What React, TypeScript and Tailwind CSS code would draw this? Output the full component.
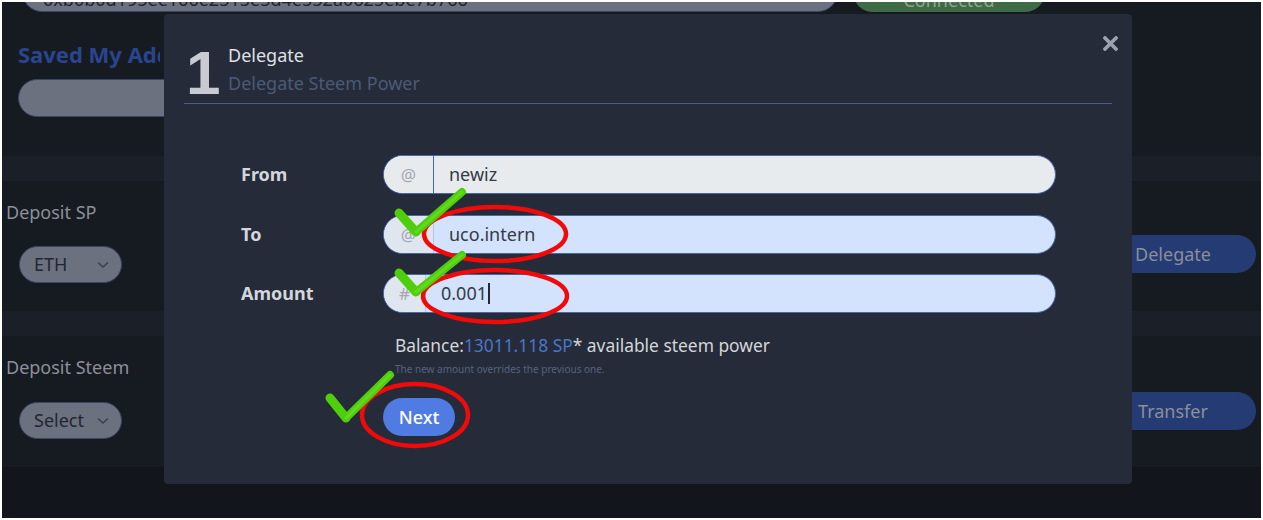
import React from "react";

const font = { fontFamily: '"Noto Sans", "Noto Sans CJK KR", sans-serif' };

function Check({ x0, y0, x1, y1, x2, y2 }: { x0: number; y0: number; x1: number; y1: number; x2: number; y2: number }) {
  return (
    <g>
      <path d={`M${x0} ${y0} L${x1} ${y1}`} stroke="#4fcf0c" strokeWidth={9} strokeLinecap="round" fill="none" />
      <path d={`M${x1} ${y1} L${x2} ${y2}`} stroke="#4fcf0c" strokeWidth={8} strokeLinecap="round" fill="none" />
      <path d={`M${x1} ${y1} L${x2} ${y2}`} stroke="#6ee02a" strokeWidth={3} strokeLinecap="round" fill="none" opacity={0.6} />
    </g>
  );
}

function InputRow({ label, prefix, value, from, prefixW, cursor }: { label: string; prefix: string; value: string; from?: boolean; prefixW: string; cursor?: boolean }) {
  return (
    <div className="flex items-center h-[39px]">
      <div className="w-[142px] text-[18px] font-bold text-[#d3d6db]">{label}</div>
      <div
        className={`flex h-[39px] w-[673px] rounded-full border border-[#4767a6] overflow-hidden ${from ? "bg-[#e8ebee]" : "bg-[#d3e2fd]"}`}
      >
        <div
          className={`${prefixW} flex items-center justify-center text-[17px] text-[#a3a8b0] border-r ${from ? "bg-[#e8ebee] border-[#4767a6]" : "bg-[#e0e6ef] border-[#b9c6dc]"}`}
        >
          {prefix}
        </div>
        <div className="flex items-center pl-[15px] text-[18px] text-[#343b45]">
          {value}
          {cursor && <span className="ml-[1px] inline-block w-[1.5px] h-[21px] bg-[#1f2937]" />}
        </div>
      </div>
    </div>
  );
}

export default function App() {
  return (
    <div className="relative w-[1263px] h-[520px] overflow-hidden border-2 border-white bg-[#12151b]" style={font}>
      {/* background page */}
      <div className="flex flex-col">
        <div className="bg-[#161a21] pl-[18px] pb-[39px]">
          <div className="flex -mt-[30px] items-center">
            <div className="ml-[2px] w-[816px] h-[40px] rounded-full bg-[#6c7180] border border-[#3a4664] flex items-end pb-[2px] pl-[20px] text-[18px] leading-[20px] text-[#1e2430] whitespace-nowrap overflow-hidden">
              0xb0b0d195ee166e2515e5d4e552a0625ebe7b766
            </div>
            <div className="ml-[15px] w-[192px] h-[40px] rounded-full bg-[#3e6a45] flex items-end justify-center pb-[2px] text-[18px] leading-[20px] text-[#8ea88f]">
              Connected
            </div>
          </div>
          <div className="mt-[27px] -ml-[2px] w-[142px] overflow-hidden whitespace-nowrap text-[22px] leading-[30px] font-bold text-[#2a4590]">Saved My Address</div>
          <div className="mt-[10px] -ml-[2px] w-[300px] h-[38px] rounded-full bg-[#6c7180] border border-[#3a4664]" />
        </div>
        <div className="h-[25px] bg-[#1b1f28]" />
        <div className="h-[130px] bg-[#161a21] flex justify-between">
          <div className="pl-[4px] pt-[18px]">
            <div className="text-[18px] leading-[26px] text-[#8c9099]">Deposit SP</div>
            <div className="mt-[21px] ml-[13px] w-[103px] h-[37px] rounded-full bg-[#6c7180] border border-[#3a4664] flex items-center justify-between pl-[14px] pr-[12px] text-[18px] text-[#22262e]">
              <span>ETH</span>
              <svg width="12" height="8" viewBox="0 0 12 8"><path d="M1 1.5 L6 6 L11 1.5" stroke="#3a3f4a" strokeWidth="1.5" fill="none" /></svg>
            </div>
          </div>
          <div className="mt-[54px] mr-[5px] w-[166px] h-[38px] rounded-full bg-[#243b74] flex items-center justify-center text-[18px] text-[#8a8f98]">
            Delegate
          </div>
        </div>
        <div className="h-[25px] bg-[#1b1f28]" />
        <div className="h-[131px] bg-[#161a21] flex justify-between">
          <div className="pl-[4px] pt-[18px]">
            <div className="text-[18px] leading-[26px] text-[#8c9099]">Deposit Steem</div>
            <div className="mt-[22px] ml-[13px] w-[103px] h-[37px] rounded-full bg-[#6c7180] border border-[#3a4664] flex items-center justify-between pl-[14px] pr-[12px] text-[18px] text-[#22262e]">
              <span>Select</span>
              <svg width="12" height="8" viewBox="0 0 12 8"><path d="M1 1.5 L6 6 L11 1.5" stroke="#3a3f4a" strokeWidth="1.5" fill="none" /></svg>
            </div>
          </div>
          <div className="mt-[56px] mr-[5px] w-[166px] h-[38px] rounded-full bg-[#243b74] flex items-center justify-center text-[18px] text-[#8a8f98]">
            Transfer
          </div>
        </div>
      </div>

      {/* modal */}
      <div className="absolute left-[162px] top-[12px] w-[968px] h-[470px] rounded-[4px] bg-[#252b38] px-[20px] pt-[30px]">
        <div className="absolute right-[14px] top-[22px]">
          <svg width="15" height="15" viewBox="0 0 15 15"><path d="M2 2 L13 13 M13 2 L2 13" stroke="#9ca3af" strokeWidth="3.6" strokeLinecap="square" /></svg>
        </div>
        <div className="flex items-center h-[60px] border-b border-[#4a5e88] pb-[1px]">
          <div className="ml-[2px] w-[32px] text-[62px] leading-[58px] font-bold text-[#c8ccd2]" style={{ fontFamily: '"Liberation Sans", sans-serif' }}>1</div>
          <div className="ml-[10px] -mt-[8px]">
            <div className="text-[18px] leading-[28px] text-[#dfe1e5]">Delegate</div>
            <div className="text-[18px] leading-[28px] text-[#4b5a79]">Delegate Steem Power</div>
          </div>
        </div>
        <div className="pl-[57px] mt-[51px] flex flex-col gap-[21px]">
          <InputRow label="From" prefix="@" value="newiz" from prefixW="w-[50px]" />
          <InputRow label="To" prefix="@" value="uco.intern" prefixW="w-[50px]" />
          <div className="-mt-[1px]">
            <InputRow label="Amount" prefix="#" value="0.001" prefixW="w-[42px]" cursor />
          </div>
        </div>
        <div className="pl-[211px] mt-[19px]">
          <div className="text-[17.4px] leading-[26px] text-[#d3d6db]">
            Balance:<span className="text-[#4a76c8]">13011.118 SP</span>* available steem power
          </div>
          <div className="text-[10px] leading-[14px] text-[#55637f] mt-[4px]">The new amount overrides the previous one.</div>
        </div>
        <div className="pl-[199px] mt-[22px]">
          <div className="w-[72px] h-[38px] rounded-full bg-[#4f7be3] flex items-center justify-center text-[18px] font-medium text-white">
            Next
          </div>
        </div>
      </div>

      {/* annotations */}
      <svg className="absolute left-0 top-0" width="1259" height="516" viewBox="2 2 1259 516">
        <ellipse cx="495" cy="234" rx="71" ry="27" stroke="#f00a0a" strokeWidth="4.5" fill="none" />
        <ellipse cx="495" cy="296" rx="72" ry="26" stroke="#f00a0a" strokeWidth="4.5" fill="none" />
        <ellipse cx="415" cy="415" rx="53" ry="31" stroke="#f00a0a" strokeWidth="4.5" fill="none" />
        <Check x0={399} y0={213} x1={416} y1={232} x2={462} y2={192} />
        <Check x0={399} y0={273} x1={416} y1={292} x2={462} y2={255} />
        <Check x0={330} y0={398} x1={346} y1={418} x2={390} y2={375} />
      </svg>
    </div>
  );
}
